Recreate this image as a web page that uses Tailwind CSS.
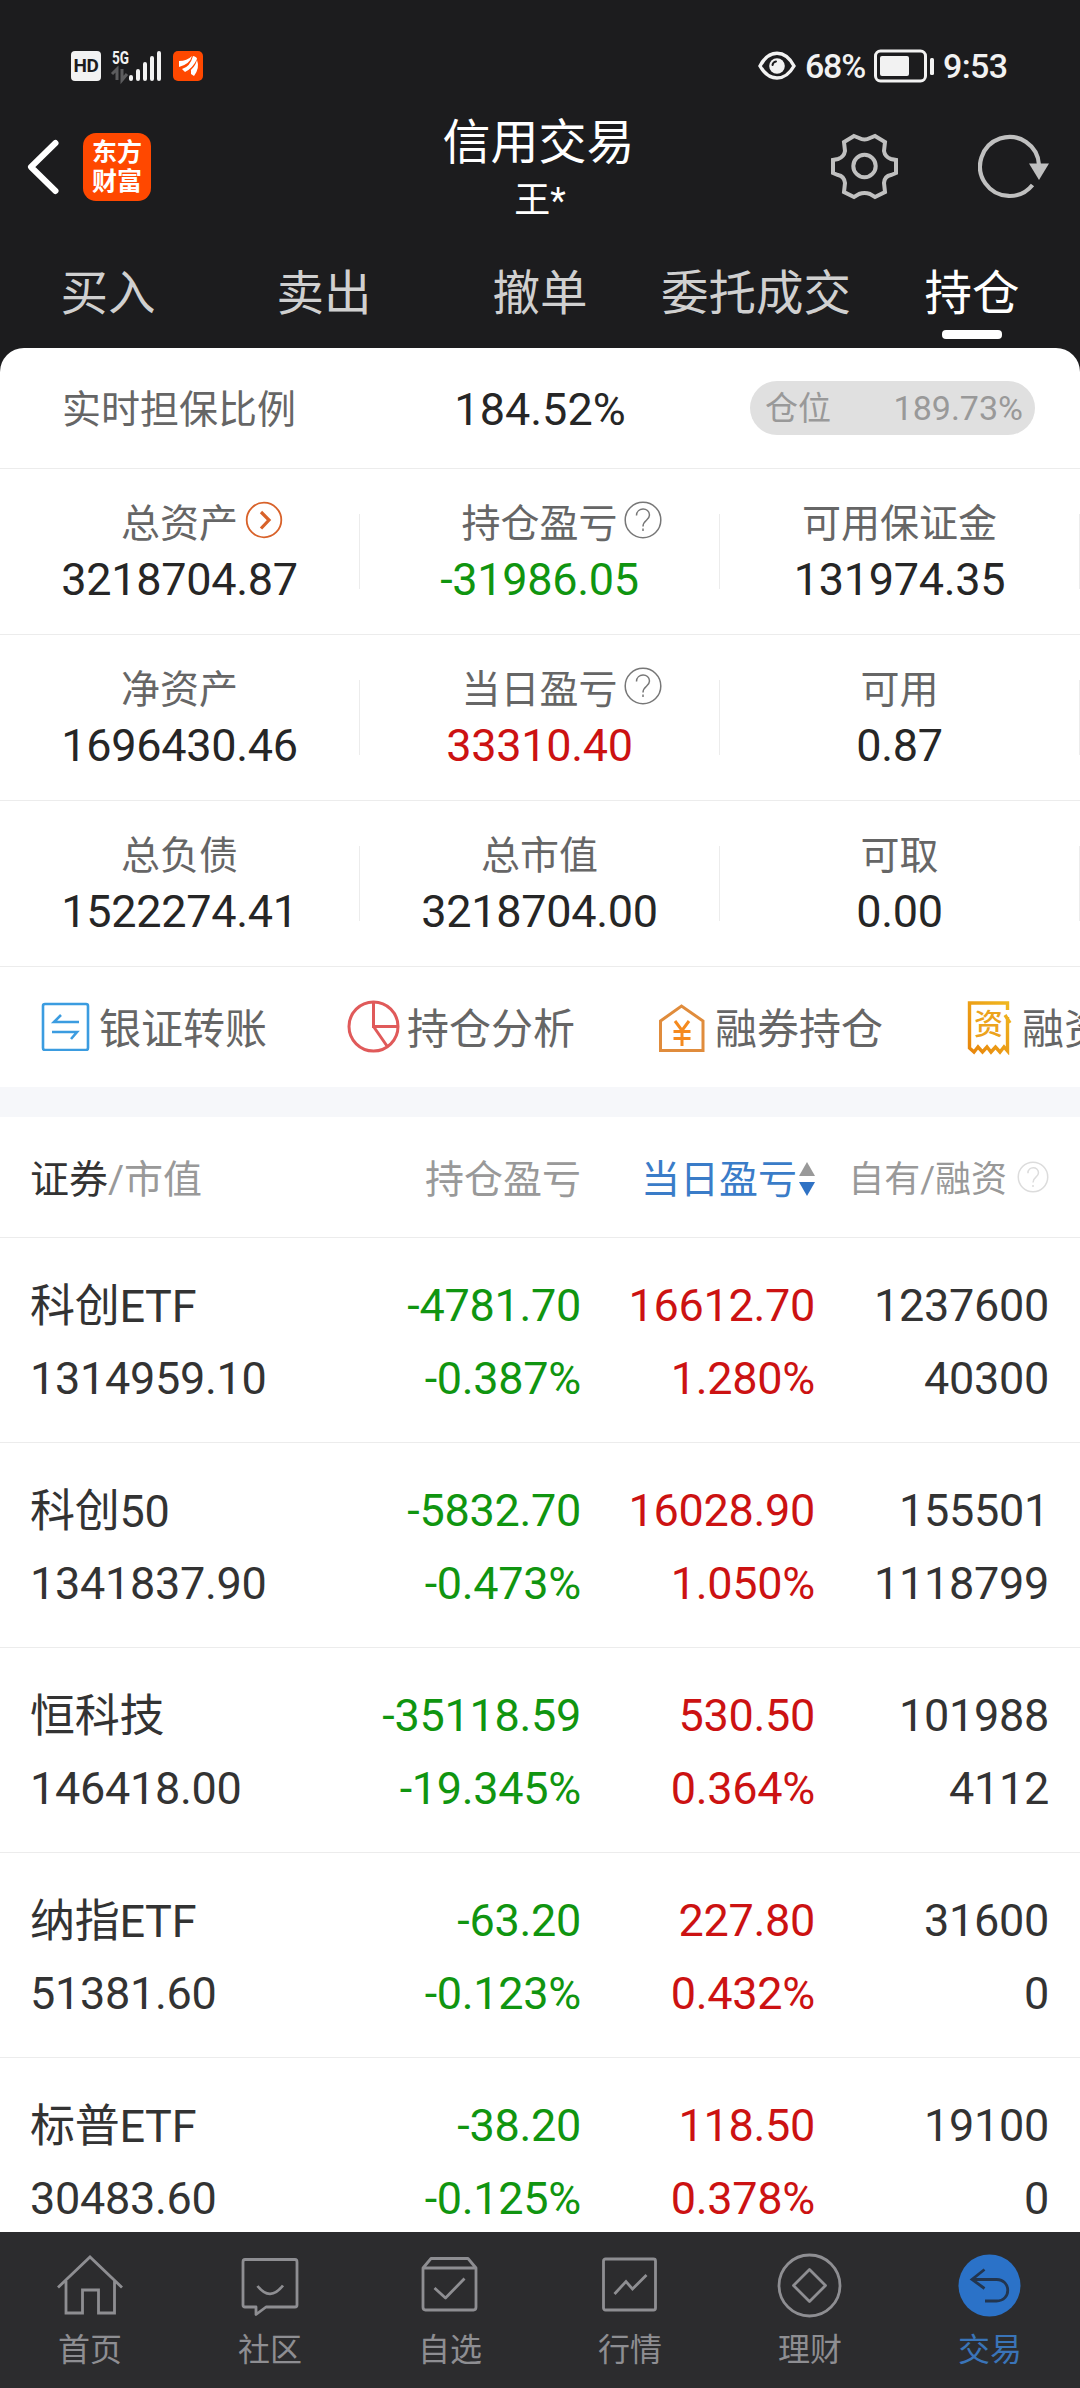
<!DOCTYPE html>
<html lang="zh-CN">
<head>
  <meta charset="UTF-8" />
  <title>信用交易</title>
  <meta name="viewport" content="width=device-width, initial-scale=1" />
  <script src="https://cdn.jsdelivr.net/npm/@tailwindcss/browser@4"></script>
</head>
<body class="w-[1080px] h-[2388px] overflow-hidden flex flex-col bg-[#1c1c1e] font-['Roboto','Noto_Sans_CJK_SC',sans-serif] whitespace-nowrap">

  <!-- STATUS BAR -->
  <div class="h-[112px] shrink-0 pt-5 pl-[71px] pr-[72px] flex items-center justify-between text-[#f2f2f2]">
    <div class="flex items-center">
      <span class="w-[30px] h-[30px] rounded-[4px] bg-[#f2f2f2] text-[#1c1c1e] text-[19px] leading-[30px] font-bold text-center tracking-[-0.5px]">HD</span>
      <svg class="ml-[11px] w-[50px] h-[34px] overflow-visible" viewBox="0 0 50 34" fill="none">
        <text x="0" y="15" font-family="Roboto" font-size="19" font-weight="700" fill="#f2f2f2" textLength="17" lengthAdjust="spacingAndGlyphs">5G</text>
        <path d="M0 25L5 20V31M10 20V31L15 25" stroke="#5c5c5e" stroke-width="3" />
        <path d="M19 28V30M26 22V30M33 15V30M40 9V30M47 4V30" stroke="#f2f2f2" stroke-width="4" stroke-linecap="round" />
      </svg>
      <svg class="ml-[11px] w-[30px] h-[30px]" viewBox="0 0 30 30">
        <rect width="30" height="30" rx="5" fill="#ff4800" />
        <path d="M6 10Q14 10 19 5Q17 13 6 16Z M9 18Q17 16 20 5Q24 6 24 8Q20 17 12 21Z M24 9Q27 17 21 25L18 23L18 19L14 22Q22 17 24 9Z" fill="#fff" />
      </svg>
    </div>
    <div class="flex items-center text-[34px] leading-[34px] font-medium">
      <svg class="w-[38px] h-[30px]" viewBox="0 0 38 30" fill="none">
        <path d="M2 15C11 -2 27 -2 36 15C27 31 11 31 2 15Z" stroke="#f2f2f2" stroke-width="3.4" />
        <circle cx="19" cy="15" r="7.8" fill="#f2f2f2" />
        <path d="M14.5 14Q15 11 18 10.500" stroke="#1c1c1e" stroke-width="2" stroke-linecap="round" />
      </svg>
      <span class="ml-[9px] w-[62px] tracking-[-1.2px]">68%</span>
      <svg class="ml-[7px] w-[61px] h-[34px]" viewBox="0 0 61 34">
        <rect x="1.500" y="2" width="50" height="30" rx="5" fill="none" stroke="#f2f2f2" stroke-width="3" />
        <rect x="6" y="7" width="29" height="20" rx="2" fill="#f2f2f2" />
        <rect x="56" y="9" width="4" height="17" rx="1.500" fill="#f2f2f2" />
      </svg>
      <span class="ml-[8px] w-[65px] tracking-[-0.6px]">9:53</span>
    </div>
  </div>

  <!-- HEADER -->
  <header class="h-[120px] shrink-0 grid grid-cols-3 text-white">
    <div class="flex pt-[21px] pl-[26px]">
      <svg class="mt-[5px] w-[34px] h-[58px]" viewBox="0 0 34 58" fill="none" stroke="#fff" stroke-width="6" stroke-linecap="round" stroke-linejoin="round">
        <path d="M29.500 5L5 29L29.500 53" />
      </svg>
      <div class="ml-[23px] w-[68px] h-[68px] rounded-[13px] bg-[#ff4800] text-[25px] leading-[29px] font-bold text-center pt-[5px]">东方<br />财富</div>
    </div>
    <div class="flex flex-col items-center">
      <h1 class="text-[48px] leading-[62px] -ml-[3px]">信用交易</h1>
      <p class="text-[36px] leading-[55px]">王*</p>
    </div>
    <div class="flex pt-[20px] pl-[111px]">
      <svg class="w-[68px] h-[68px]" viewBox="0 0 68 68" fill="none" stroke="#c0c0c0" stroke-width="4">
        <path d="M23 4L28 6Q33.500 9 39 6L44 4L54 10L53 19Q54 25 60 27L65 28L65 41L60 43Q53.500 44 53 51L54 60L44 65L39 62Q33.500 60 28 62L23 65L13 60L14 51Q13 44 7 43L2 41L2 28L7 27Q13 25 14 19L13 10Z" />
        <circle cx="33.500" cy="34" r="11.200" />
      </svg>
      <svg class="ml-[79px] w-[72px] h-[68px]" viewBox="0 0 72 68" fill="none">
        <path d="M61 33A29.500 29.500 0 1 0 54.500 53" stroke="#c0c0c0" stroke-width="4.200" />
        <path d="M51 31.500H71L61 48Z" fill="#c0c0c0" />
      </svg>
    </div>
  </header>

  <!-- TABS -->
  <nav class="h-[116px] shrink-0 grid grid-cols-5 text-[47.500px] leading-[124px] text-center text-[#d0d0d0]">
    <a>买入</a>
    <a>卖出</a>
    <a>撤单</a>
    <a>委托成交</a>
    <a class="relative text-white">持仓
      <span class="absolute left-1/2 -translate-x-1/2 top-[98px] w-[60px] h-[9px] rounded-[4px] bg-white"></span>
    </a>
  </nav>

  <main class="flex-1 min-h-0 overflow-hidden bg-white rounded-t-[24px]">

    <!-- RATIO -->
    <section class="h-[121px] border-b border-[#ececec] grid grid-cols-3 items-center">
      <span class="pl-[62px] text-[39px] text-[#666] pt-[5px]">实时担保比例</span>
      <span class="text-center text-[45px] text-[#262626] pt-[3px]">184.52%</span>
      <div class="ml-[30px] w-[285px] h-[54px] rounded-full bg-[#e0e0e0] pl-[15px] pr-[12px] flex items-center justify-between text-[33px] text-[#999]">
        <span class="pt-[2px]">仓位</span>
        <span class="text-[34px]">189.73%</span>
      </div>
    </section>

    <!-- ASSET SUMMARY -->
    <section id="summary"></section>

    <!-- SHORTCUTS -->
    <section class="h-[120px] pl-[41px] flex items-start overflow-hidden text-[42px] leading-[125px] text-[#666]">
      <div class="w-[306px] shrink-0 flex">
        <svg class="mt-[35px] w-[49px] h-[49px] shrink-0" viewBox="0 0 49 49" fill="none" stroke="#3b9ce0" stroke-width="2.600">
          <rect x="2" y="2" width="45" height="46" rx="2" />
          <path d="M38 20H13L20 13M11 30H36L30 37" />
        </svg>
        <span class="ml-[9px]">银证转账</span>
      </div>
      <div class="w-[311px] shrink-0 flex">
        <svg class="mt-[33px] w-[53px] h-[53px] shrink-0" viewBox="0 0 53 53" fill="none" stroke="#e05a5a" stroke-width="3">
          <circle cx="26.500" cy="26.500" r="24.500" />
          <path d="M26.500 2V26.500H51M26.500 26.500L40 46" />
        </svg>
        <span class="ml-[7px]">持仓分析</span>
      </div>
      <div class="w-[309px] shrink-0 flex">
        <svg class="mt-[36px] w-[47px] h-[50px] shrink-0" viewBox="0 0 47 50" fill="none" stroke="#e08c3c" stroke-width="3">
          <path d="M2.500 18L23.500 3L45 18V47.500H2.500Z" />
          <path d="M17 18L24 27.500L31 18M24 27V43M15.500 28.500H32.500M15.500 35.500H32.500" stroke="#f58a1e" />
        </svg>
        <span class="ml-[10px]">融券持仓</span>
      </div>
      <div class="shrink-0 flex">
        <svg class="mt-[34px] w-[45px] h-[54px] shrink-0" viewBox="0 0 45 54" fill="none">
          <defs>
            <linearGradient id="bill" x1="1" y1="0" x2="0" y2="1">
              <stop offset="0" stop-color="#f0b820" />
              <stop offset="1" stop-color="#e8860c" />
            </linearGradient>
          </defs>
          <path d="M40.500 9V2H2.500V47L7 51L11 46L15.500 51L20 46L24 51L28.500 46L33 51L37 46L40.500 50V16M38 14L43 22" stroke="url(#bill)" stroke-width="3.400" />
          <text x="21.500" y="34" text-anchor="middle" font-family="Noto Sans CJK SC" font-size="29" font-weight="500" fill="#eca31c">资</text>
        </svg>
        <span class="ml-[10px]">融资</span>
      </div>
    </section>

    <div class="h-[30px] bg-[#f6f7fa]"></div>

    <!-- TABLE HEAD -->
    <div class="h-[121px] border-b border-[#ececec] pl-[30px] pr-[31px] grid grid-cols-[251px_300px_234px_234px] text-[39px] leading-[126px] text-[#999] text-right">
      <span class="text-left"><b class="font-normal text-[#333]">证券</b>/市值</span>
      <span>持仓盈亏</span>
      <span class="flex justify-end text-[#3a7cc8]">当日盈亏
        <svg class="mt-[45px] ml-[2px] w-[16px] h-[34px]" viewBox="0 0 16 34">
          <path d="M8 0L16 14H0Z" fill="#999" />
          <path d="M8 34L16 20H0Z" fill="#2f72c4" />
        </svg>
      </span>
      <span class="flex justify-end text-[36px]">自有/融资
        <svg class="mt-[44px] ml-[10px] w-[32px] h-[32px]" viewBox="0 0 38 38" fill="none" stroke="#dcdcdc" stroke-width="1.800">
          <circle cx="19" cy="19" r="17.500" />
          <path d="M13 14.500C13 6 25.500 6 25.500 14C25.500 19.500 19 19 19 25.500M19 28.500V31" />
        </svg>
      </span>
    </div>

    <!-- HOLDINGS -->
    <div id="holdings"></div>
  </main>

  <!-- BOTTOM NAV -->
  <footer class="h-[156px] shrink-0 bg-[#2c2c2e] grid grid-cols-6 text-[32px] leading-[46px] text-[#8e8e92]">
    <a class="flex flex-col items-center pt-[20px]">
      <svg class="w-[68px] h-[68px] mb-[7px]" viewBox="0 0 68 68" fill="none" stroke="#8e8e92" stroke-width="2.800">
        <path d="M2 35.500L34 5L66 35.500M10 29V61H26.500V38H42.500V61H58.500V29" />
      </svg>
      首页
    </a>
    <a class="flex flex-col items-center pt-[20px]">
      <svg class="w-[68px] h-[68px] mb-[7px]" viewBox="0 0 68 68" fill="none" stroke="#8e8e92" stroke-width="2.800" stroke-linejoin="round">
        <path d="M9 7.500H59Q61 7.500 61 10V53Q61 55 59 55H30L20 62.500V55H9Q7 55 7 53V10Q7 7.500 9 7.500Z" />
        <path d="M21.500 34Q34 50 47 33.500" />
      </svg>
      社区
    </a>
    <a class="flex flex-col items-center pt-[20px]">
      <svg class="w-[68px] h-[68px] mb-[7px]" viewBox="0 0 68 68" fill="none" stroke="#8e8e92" stroke-width="2.800" stroke-linejoin="round">
        <path d="M7 16L15 6.500H52L60 16V55Q60 58 57.500 58H9.500Q7 58 7 55ZM7 16H60" />
        <path d="M18.500 36L29.500 46L48.500 26.500" />
      </svg>
      自选
    </a>
    <a class="flex flex-col items-center pt-[20px]">
      <svg class="w-[68px] h-[68px] mb-[7px]" viewBox="0 0 68 68" fill="none" stroke="#8e8e92" stroke-width="2.800">
        <rect x="7.500" y="7" width="52" height="51" rx="2" />
        <path d="M18.500 42L30 29.500L36.500 37L50.500 23" />
      </svg>
      行情
    </a>
    <a class="flex flex-col items-center pt-[20px]">
      <svg class="w-[68px] h-[68px] mb-[7px]" viewBox="0 0 68 68" fill="none" stroke="#8e8e92" stroke-width="2.800" stroke-linejoin="round">
        <circle cx="33.500" cy="33.500" r="30.500" />
        <path d="M33.500 17.500L49.500 33.500L33.500 49.500L17.500 33.500Z" />
      </svg>
      理财
    </a>
    <a class="flex flex-col items-center pt-[20px] text-[#3a74b8]">
      <svg class="w-[68px] h-[68px] mb-[7px]" viewBox="0 0 68 68" fill="none" stroke="#22354f" stroke-width="2.800">
        <circle cx="33.500" cy="33.500" r="31" fill="#2b72c8" stroke="none" />
        <path d="M28.500 17.500L16 27.500L28.500 36.500M16.500 27.500H40.500C55.500 27.500 55.500 49 40.500 49H29" />
      </svg>
      交易
    </a>
  </footer>

  <script>
    const arrowIcon = `
      <svg class="absolute left-full top-[5px] ml-[7px] w-[38px] h-[38px]" viewBox="0 0 38 38" fill="none" stroke="#d8622a">
        <circle cx="19" cy="19" r="17.300" stroke-width="1.800" />
        <path d="M16 11L24 19L16 27.500" stroke-width="3.200" />
      </svg>`;

    const helpIcon = `
      <svg class="absolute left-full top-[5px] ml-[6px] w-[38px] h-[38px]" viewBox="0 0 38 38" fill="none" stroke="#777" stroke-width="1.500">
        <circle cx="19" cy="19" r="17.800" />
        <path d="M12.500 14.500C12.500 6 25.500 6 25.500 14C25.500 19.500 19 19 19 25.500M19 27.500V30" />
      </svg>`;

    const summary = [
      [['总资产', '3218704.87', '', arrowIcon], ['持仓盈亏', '-31986.05', 'text-[#109510]', helpIcon], ['可用保证金', '131974.35', '', '']],
      [['净资产', '1696430.46', '', ''], ['当日盈亏', '33310.40', 'text-[#cc1212]', helpIcon], ['可用', '0.87', '', '']],
      [['总负债', '1522274.41', '', ''], ['总市值', '3218704.00', '', ''], ['可取', '0.00', '', '']]
    ];

    const holdings = [
      ['科创ETF', '1314959.10', '-4781.70', '-0.387%', '16612.70', '1.280%', '1237600', '40300'],
      ['科创50', '1341837.90', '-5832.70', '-0.473%', '16028.90', '1.050%', '155501', '1118799'],
      ['恒科技', '146418.00', '-35118.59', '-19.345%', '530.50', '0.364%', '101988', '4112'],
      ['纳指ETF', '51381.60', '-63.20', '-0.123%', '227.80', '0.432%', '31600', '0'],
      ['标普ETF', '30483.60', '-38.20', '-0.125%', '118.50', '0.378%', '19100', '0']
    ];

    document.getElementById('summary').innerHTML = summary.map(row => `
      <div class="h-[166px] border-b border-[#ececec] grid grid-cols-3 items-center">
        ${row.map(([label, value, color, icon]) => `
          <div class="h-[75px] border-r border-[#ececec] flex flex-col items-center justify-center text-[#262626]">
            <span class="relative text-[39px] leading-[56px] text-[#666]">${label}${icon}</span>
            <span class="text-[45px] leading-[56px] tracking-[-0.3px] ${color}">${value}</span>
          </div>`).join('')}
      </div>`).join('');

    document.getElementById('holdings').innerHTML = holdings.map(h => `
      <div class="h-[205px] border-b border-[#ececec] pt-[31px] pl-[30px] pr-[31px] grid grid-cols-[251px_300px_234px_234px] grid-rows-[73px_73px] text-[45px] leading-[73px] tracking-[-0.3px] text-right text-[#333]">
        <span class="text-left leading-[75px]">${h[0]}</span>
        <span class="text-[#109510]">${h[2]}</span>
        <span class="text-[#cc1212]">${h[4]}</span>
        <span>${h[6]}</span>
        <span class="text-left">${h[1]}</span>
        <span class="text-[#109510]">${h[3]}</span>
        <span class="text-[#cc1212]">${h[5]}</span>
        <span>${h[7]}</span>
      </div>`).join('');
  </script>
</body>
</html>
